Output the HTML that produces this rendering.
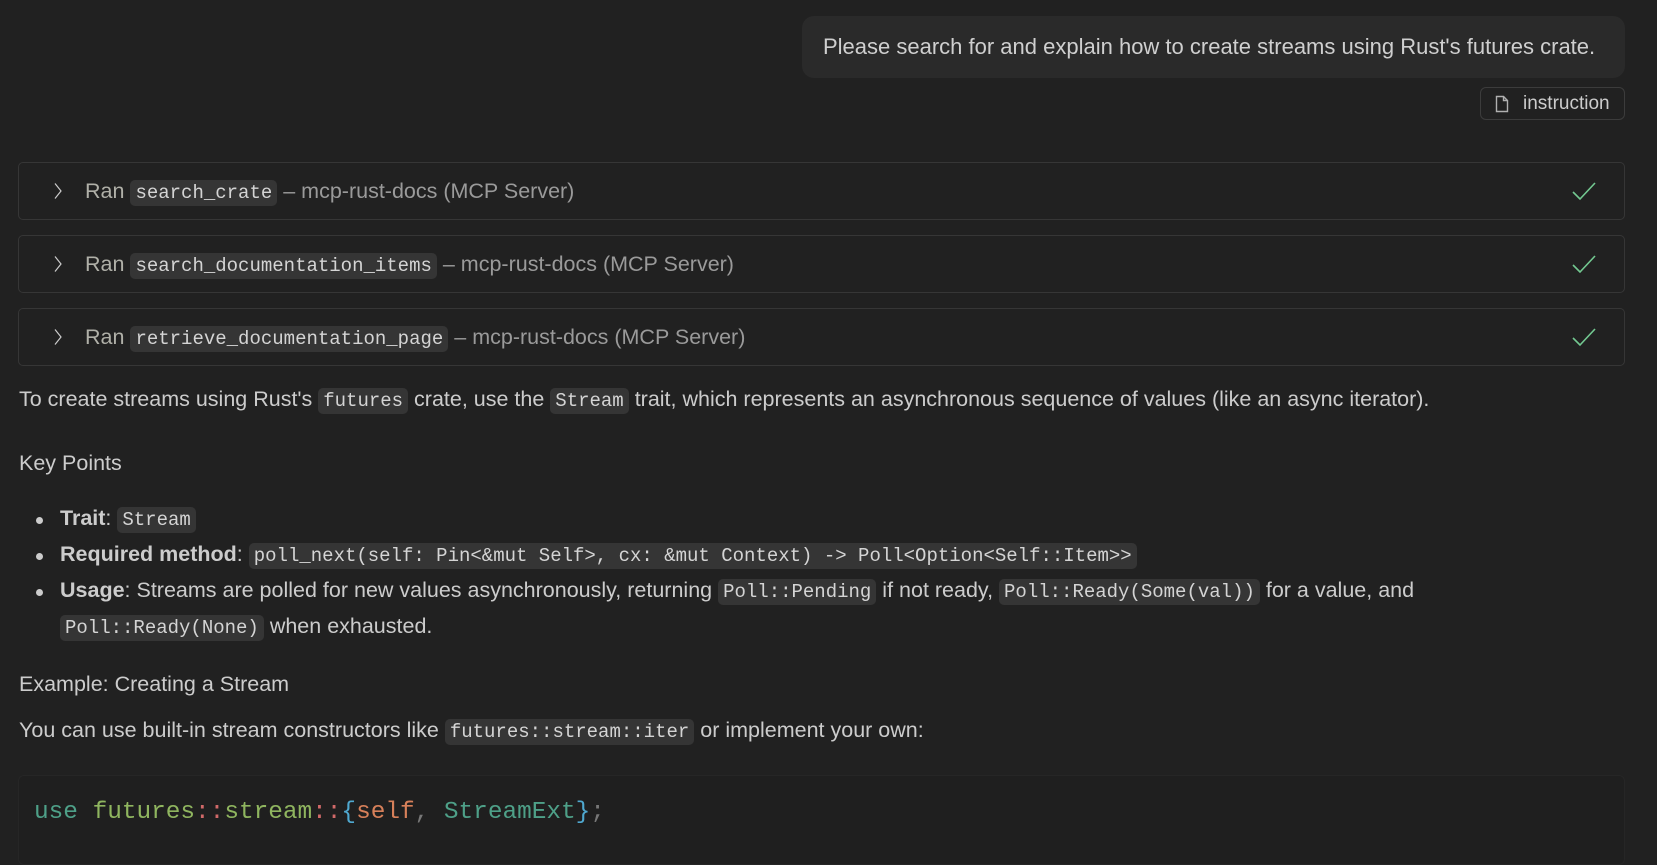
<!DOCTYPE html>
<html><head><meta charset="utf-8"><style>
*{box-sizing:border-box;margin:0;padding:0}
body{width:1657px;height:846px;overflow:hidden;background:#212121;color:#cccccc;font-family:"Liberation Sans",sans-serif;font-size:21.5px;position:relative}
.a{position:absolute;white-space:nowrap}
code{font-family:"Liberation Mono",monospace;font-size:19px;background:#353535;color:#d4d4d4;border-radius:5px;padding:2px 5px}
.bubble{left:802px;top:16px;width:823px;height:62px;background:#2a2a2a;border-radius:12px;padding:0 0 0 21px;line-height:62px;color:#cfcfcf;font-size:22px}
.chip{left:1480px;top:87px;width:145px;height:33px;border:1px solid #3c3c3c;border-radius:6px;font-size:19px;line-height:31px;padding-left:42px;color:#cccccc}
.card{left:18px;width:1607px;height:58px;border:1px solid #363636;border-radius:5px}
.card .t{position:absolute;left:66px;top:0;line-height:56px;color:#9a9a9a}
.card .t b{font-weight:normal;color:#b0b0a8}
.card svg.ch{position:absolute;left:34px;top:19px}
.card svg.ok{position:absolute;right:28px;top:18px}
.li{left:60px}
.dot{position:absolute;left:-24px;top:11px;width:7px;height:7px;border-radius:50%;background:#cccccc}
.codeblk{left:18px;top:775px;width:1607px;height:90px;background:#1f1f1f;border:1px solid #262626;border-radius:6px}
.cl{left:34px;top:799px;font-family:"Liberation Mono",monospace;font-size:24.4px;color:#d4d4d4}
</style></head><body>
<div class="a bubble">Please search for and explain how to create streams using Rust's futures crate.</div>
<div class="a chip"><svg style="position:absolute;left:14px;top:7px" width="14" height="18" viewBox="0 0 14 18"><path d="M1.5 1.5h7l4 4v11h-11z M8.5 1.5v4h4" fill="none" stroke="#b0b0b0" stroke-width="1.4"/></svg>instruction</div>

<div class="a card" style="top:162px"><svg class="ch" width="10" height="18" viewBox="0 0 10 18"><path d="M2 1.5l6 7.5-6 7.5" fill="none" stroke="#cccccc" stroke-width="1.2"/></svg><div class="t"><b>Ran</b> <code>search_crate</code> – mcp-rust-docs (MCP Server)</div><svg class="ok" width="24" height="20" viewBox="0 0 24 20"><path d="M1 11l7 7L23 2" fill="none" stroke="#73c991" stroke-width="1.6"/></svg></div>
<div class="a card" style="top:235px"><svg class="ch" width="10" height="18" viewBox="0 0 10 18"><path d="M2 1.5l6 7.5-6 7.5" fill="none" stroke="#cccccc" stroke-width="1.2"/></svg><div class="t"><b>Ran</b> <code>search_documentation_items</code> – mcp-rust-docs (MCP Server)</div><svg class="ok" width="24" height="20" viewBox="0 0 24 20"><path d="M1 11l7 7L23 2" fill="none" stroke="#73c991" stroke-width="1.6"/></svg></div>
<div class="a card" style="top:308px"><svg class="ch" width="10" height="18" viewBox="0 0 10 18"><path d="M2 1.5l6 7.5-6 7.5" fill="none" stroke="#cccccc" stroke-width="1.2"/></svg><div class="t"><b>Ran</b> <code>retrieve_documentation_page</code> – mcp-rust-docs (MCP Server)</div><svg class="ok" width="24" height="20" viewBox="0 0 24 20"><path d="M1 11l7 7L23 2" fill="none" stroke="#73c991" stroke-width="1.6"/></svg></div>

<div class="a" style="left:19px;top:387px">To create streams using Rust's <code>futures</code> crate, use the <code>Stream</code> trait, which represents an asynchronous sequence of values (like an async iterator).</div>
<div class="a" style="left:19px;top:451px">Key Points</div>
<div class="a li" style="top:506px"><span class="dot"></span><b>Trait</b>: <code>Stream</code></div>
<div class="a li" style="top:542px"><span class="dot"></span><b>Required method</b>: <code>poll_next(self: Pin&lt;&amp;mut Self&gt;, cx: &amp;mut Context) -&gt; Poll&lt;Option&lt;Self::Item&gt;&gt;</code></div>
<div class="a li" style="top:578px"><span class="dot"></span><b>Usage</b>: Streams are polled for new values asynchronously, returning <code>Poll::Pending</code> if not ready, <code>Poll::Ready(Some(val))</code> for a value, and</div>
<div class="a li" style="top:614px"><code>Poll::Ready(None)</code> when exhausted.</div>
<div class="a" style="left:19px;top:672px">Example: Creating a Stream</div>
<div class="a" style="left:19px;top:718px">You can use built-in stream constructors like <code>futures::stream::iter</code> or implement your own:</div>
<div class="a codeblk"></div>
<div class="a cl"><span style="color:#4ea088">use</span> <span style="color:#8fb55f">futures</span><span style="color:#d16969">::</span><span style="color:#8fb55f">stream</span><span style="color:#d16969">::</span><span style="color:#4fa8cf">{</span><span style="color:#d7805a">self</span><span style="color:#777">,</span> <span style="color:#4ea088">StreamExt</span><span style="color:#4fa8cf">}</span><span style="color:#777">;</span></div>
</body></html>
